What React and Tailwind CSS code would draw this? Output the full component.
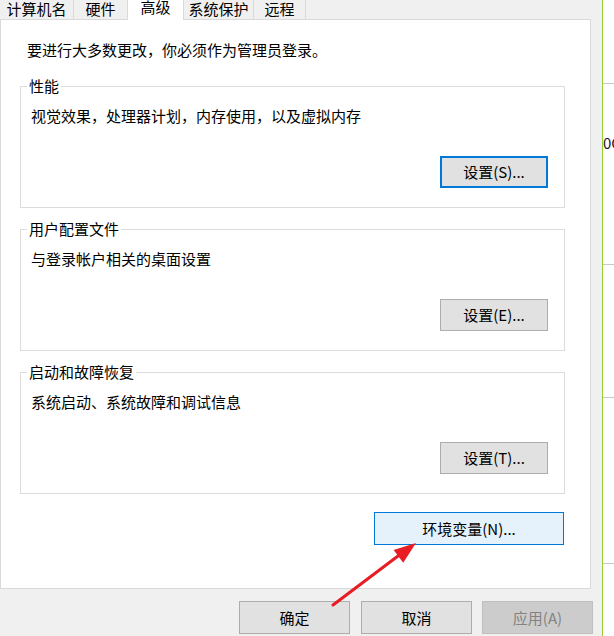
import React from 'react';

const font = { fontFamily: '"Noto Sans CJK SC", "Noto Sans", sans-serif' };

function Tab({ label, width, active }) {
  return (
    <div
      className={`flex justify-center border-r border-[#d9d9d9] text-[15px] leading-[18px] text-black ${
        active ? 'relative z-10 h-[20px] bg-white' : 'h-[19px] bg-[#f0f0f0]'
      } ${width}`}
    >
      <span className={active ? '-mt-[2px]' : ''}>{label}</span>
    </div>
  );
}

function Button({ children, className = '', variant = 'normal' }) {
  const look = {
    normal: 'border border-[#adadad] bg-[#e1e1e1] text-black',
    focus: 'border-2 border-[#0078d7] bg-[#e1e1e1] text-black',
    hover: 'border border-[#0078d7] bg-[#e5f1fb] text-black',
    disabled: 'border border-[#bfbfbf] bg-[#cccccc] text-[#838383]',
  }[variant];
  return (
    <div className={`flex items-center justify-center text-[15px] leading-[18px] ${look} ${className}`}>
      {children}
    </div>
  );
}

function Group({ title, text, button, focus, className = '' }) {
  return (
    <div className={`relative flex h-[122px] w-[545px] flex-col border border-[#dcdcdc] ${className}`}>
      <span className="absolute -top-[10px] left-[6px] bg-white px-[2px] text-[15px] leading-[18px] text-black">
        {title}
      </span>
      <p className="mt-[20px] pl-[10px] text-[15px] leading-[18px] text-black">{text}</p>
      <Button variant={focus ? 'focus' : 'normal'} className="mr-[16px] mt-[31px] h-[32px] w-[108px] self-end">
        {button}
      </Button>
    </div>
  );
}

export default function App() {
  return (
    <div className="relative flex h-[636px] w-[614px] overflow-hidden bg-[#f0f0f0]" style={font}>
      <div className="flex w-[602px] flex-col">
        <div className="flex h-[19px] items-start">
          <Tab label="计算机名" width="w-[74px]" />
          <Tab label="硬件" width="w-[54px]" />
          <Tab label="高级" width="w-[56px]" active />
          <Tab label="系统保护" width="w-[70px]" />
          <Tab label="远程" width="w-[52px]" />
        </div>
        <div className="flex h-[570px] w-[591px] flex-col border border-[#d9d9d9] bg-white pl-[19px]">
          <p className="mt-[21px] pl-[7px] text-[15px] leading-[18px] text-black">
            要进行大多数更改，你必须作为管理员登录。
          </p>
          <Group
            className="mt-[27px]"
            title="性能"
            text="视觉效果，处理器计划，内存使用，以及虚拟内存"
            button="设置(S)..."
            focus
          />
          <Group className="mt-[21px]" title="用户配置文件" text="与登录帐户相关的桌面设置" button="设置(E)..." />
          <Group className="mt-[21px]" title="启动和故障恢复" text="系统启动、系统故障和调试信息" button="设置(T)..." />
          <Button variant="hover" className="ml-[354px] mt-[18px] h-[33px] w-[190px]">
            环境变量(N)...
          </Button>
        </div>
        <div className="mt-[12px] flex">
          <Button className="ml-[239px] h-[33px] w-[111px]">确定</Button>
          <Button className="ml-[11px] h-[33px] w-[111px]">取消</Button>
          <Button variant="disabled" className="ml-[10px] h-[33px] w-[111px]">
            应用(A)
          </Button>
        </div>
      </div>
      <div className="w-px bg-[#9acd32]" />
      <div className="flex w-[11px] flex-col overflow-hidden bg-white">
        <div className="mt-[83px] h-px w-full bg-[#c8c8c8]" />
        <span className="mt-[50px] whitespace-nowrap text-[15px] leading-[18px] text-[#14143c]">0C</span>
        <div className="mt-[112px] h-px w-full bg-[#c8c8c8]" />
        <div className="mt-[132px] h-px w-full bg-[#c8c8c8]" />
        <div className="mt-[165px] h-px w-full bg-[#c8c8c8]" />
      </div>
      <svg className="pointer-events-none absolute left-0 top-0" width="614" height="636">
        <line x1="333" y1="605" x2="402" y2="553" stroke="#e81c23" strokeWidth="3" strokeLinecap="round" />
        <polygon points="416,543 393.6,549.9 403.2,562.7" fill="#e81c23" />
      </svg>
    </div>
  );
}
